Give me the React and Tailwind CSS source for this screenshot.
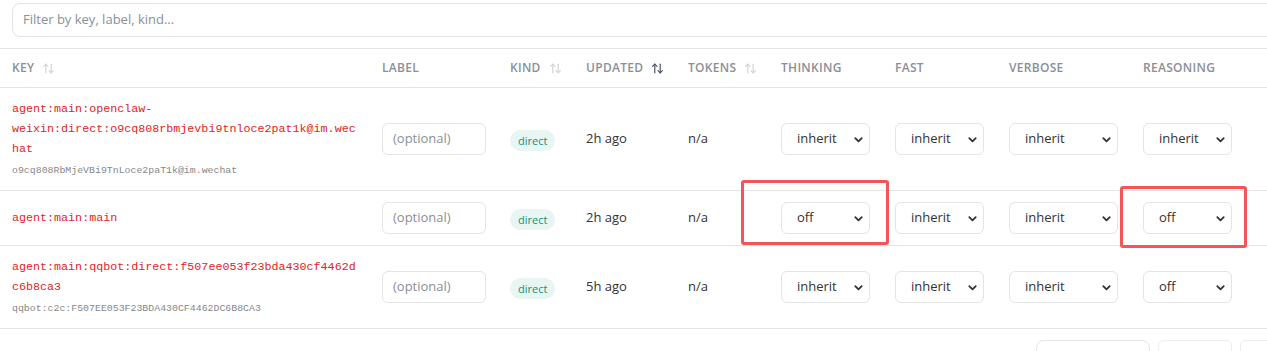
import React from 'react';

const sans = { fontFamily: '"Open Sans", "Noto Sans", sans-serif' };
const mono = { fontFamily: '"Liberation Mono", monospace' };

const rows = [
  {
    key: 'agent:main:openclaw-weixin:direct:o9cq808rbmjevbi9tnloce2pat1k@im.wechat',
    sub: 'o9cq808RbMjeVBi9TnLoce2paT1k@im.wechat',
    updated: '2h ago',
    thinking: 'inherit',
    fast: 'inherit',
    verbose: 'inherit',
    reasoning: 'inherit'
  },
  {
    key: 'agent:main:main',
    updated: '2h ago',
    thinking: 'off',
    fast: 'inherit',
    verbose: 'inherit',
    reasoning: 'off'
  },
  {
    key: 'agent:main:qqbot:direct:f507ee053f23bda430cf4462dc6b8ca3',
    sub: 'qqbot:c2c:F507EE053F23BDA430CF4462DC6B8CA3',
    updated: '5h ago',
    thinking: 'inherit',
    fast: 'inherit',
    verbose: 'inherit',
    reasoning: 'off'
  }
];

function SortIcon({ active }) {
  return (
    <svg
      width="13"
      height="13"
      viewBox="0 0 24 24"
      fill="none"
      stroke={active ? '#4b5563' : '#d4d4d8'}
      strokeWidth="2.2"
      strokeLinecap="round"
      strokeLinejoin="round"
      className="ml-2 inline-block"
    >
      <path d="M7 20V4" />
      <path d="m3 8 4-4 4 4" />
      <path d="M17 4v16" />
      <path d="m13 16 4 4 4-4" />
    </svg>
  );
}

function Select({ value, width }) {
  return (
    <div className={`relative ${width}`}>
      <div className="flex h-[32px] items-center rounded-md border border-[#e4e4e7] bg-white pl-[15px] text-[13px] text-[#333]">
        {value}
      </div>
      <svg
        width="11"
        height="11"
        viewBox="0 0 24 24"
        fill="none"
        stroke="#333"
        strokeWidth="4"
        strokeLinecap="round"
        strokeLinejoin="round"
        className="absolute right-[6px] top-[11px]"
      >
        <path d="m5 9 7 7 7-7" />
      </svg>
    </div>
  );
}

const th = 'px-3 text-left text-[12px] font-semibold uppercase tracking-[0.3px] text-[#8b8f98]';
const td = 'px-3 py-[11px] align-middle';

export default function App() {
  return (
    <div className="relative h-[351px] w-[1267px] overflow-hidden bg-white" style={sans}>
      <div className="w-[1300px]">
        <div className="pl-3 pt-[3px]">
          <div className="flex h-[34px] items-center rounded-lg border border-[#e4e4e7] px-[10px] text-[13px] text-[#8a8f98]">
            Filter by key, label, kind...
          </div>
        </div>

        <table className="mt-[11px] w-[1281px] table-fixed border-collapse">
          <colgroup>
            <col className="w-[370px]" />
            <col className="w-[128px]" />
            <col className="w-[76px]" />
            <col className="w-[102px]" />
            <col className="w-[93px]" />
            <col className="w-[114px]" />
            <col className="w-[114px]" />
            <col className="w-[134px]" />
            <col className="w-[150px]" />
          </colgroup>
          <thead>
            <tr className="h-[39px] border-y border-[#e4e4e7]">
              <th className={th}>
                <span className="inline-flex items-center">KEY<SortIcon /></span>
              </th>
              <th className={th}>LABEL</th>
              <th className={th}>
                <span className="inline-flex items-center">KIND<SortIcon /></span>
              </th>
              <th className={th}>
                <span className="inline-flex items-center">UPDATED<SortIcon active /></span>
              </th>
              <th className={th}>
                <span className="inline-flex items-center">TOKENS<SortIcon /></span>
              </th>
              <th className={th}>THINKING</th>
              <th className={th}>FAST</th>
              <th className={th}>VERBOSE</th>
              <th className={th}>REASONING</th>
            </tr>
          </thead>
          <tbody>
            {rows.map((row) => (
              <tr key={row.key} className="border-b border-[#e4e4e7]">
                <td className={td}>
                  <div
                    className="w-[346px] text-[11.7px] leading-[20px] text-[#e02424] [overflow-wrap:anywhere]"
                    style={mono}
                  >
                    {row.key}
                  </div>
                  {row.sub && (
                    <div className="mt-1 text-[9.9px] leading-[16px] text-[#888]" style={mono}>
                      {row.sub}
                    </div>
                  )}
                </td>
                <td className={td}>
                  <div className="flex h-[32px] w-[104px] items-center rounded-md border border-[#e4e4e7] pl-[10px] text-[13px] text-[#8a8f98]">
                    (optional)
                  </div>
                </td>
                <td className={td}>
                  <span className="inline-flex h-[21px] items-center rounded-full bg-[#e8f6f3] px-2 text-[11px] text-[#16907a]">
                    direct
                  </span>
                </td>
                <td className={`${td} text-[13px] text-[#333]`}>{row.updated}</td>
                <td className={`${td} text-[13px] text-[#333]`}>n/a</td>
                <td className={td}>
                  <Select value={row.thinking} width="w-[89px]" />
                </td>
                <td className={td}>
                  <Select value={row.fast} width="w-[89px]" />
                </td>
                <td className={td}>
                  <Select value={row.verbose} width="w-[109px]" />
                </td>
                <td className={td}>
                  <Select value={row.reasoning} width="w-[89px]" />
                </td>
              </tr>
            ))}
          </tbody>
        </table>

        <div className="flex items-start justify-between pl-3 pt-[11px]">
          <div className="pt-[10px] text-[13px] text-[#888]">1-3 of 3</div>
          <div className="flex gap-2 pr-[10px]">
            <div className="flex h-[32px] w-[114px] items-center rounded-lg border border-[#e4e4e7] px-3 text-[13px] text-[#333]">
              10 per page
            </div>
            <div className="flex h-[32px] w-[74px] items-center rounded-md border border-[#ececef] px-3 text-[13px] text-[#aaa]">
              Previous
            </div>
            <div className="flex h-[32px] w-[50px] items-center rounded-md border border-[#ececef] px-3 text-[13px] text-[#aaa]">
              Next
            </div>
          </div>
        </div>
      </div>

      {/* highlight boxes drawn over the table */}
      <div className="pointer-events-none absolute left-[741px] top-[180px] h-[65px] w-[148px] rounded-[3px] border-[3px] border-[#f25656]" />
      <div className="pointer-events-none absolute left-[1120px] top-[186px] h-[62px] w-[127px] rounded-[3px] border-[3px] border-[#f25656]" />
    </div>
  );
}
